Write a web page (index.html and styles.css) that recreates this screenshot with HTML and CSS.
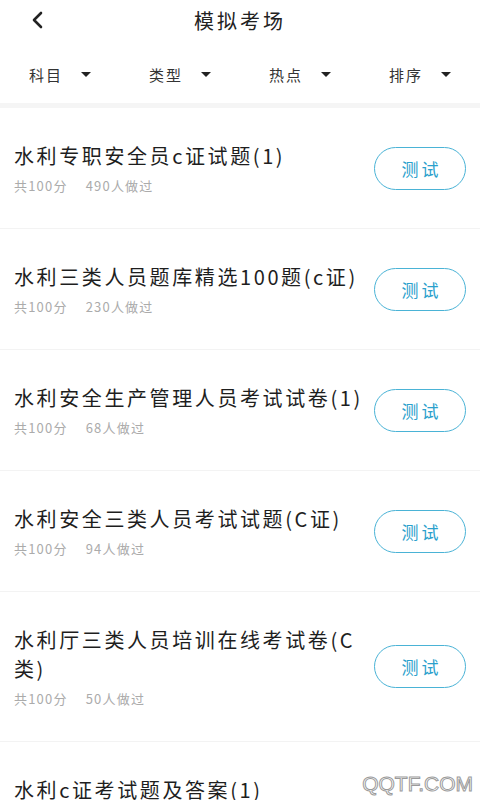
FILE: index.html
```html
<!DOCTYPE html>
<html lang="zh-CN">
<head>
  <meta charset="UTF-8">
  <meta name="viewport" content="width=device-width, initial-scale=1.0">
  <title>模拟考场</title>
  <link rel="stylesheet" href="styles.css">
</head>
<body>

  <header class="header">
    <div class="topbar">
      <a class="back" href="#">
        <svg width="14" height="18" viewBox="0 0 14 18">
          <path d="M11 2 L4 9 L11 16" fill="none" stroke="#222" stroke-width="2.6" stroke-linecap="round" stroke-linejoin="round"/>
        </svg>
      </a>
      <h1 class="title">模拟考场</h1>
      <span></span>
    </div>
    <div class="filters">
      <div class="filter">科目 <span class="caret"></span></div>
      <div class="filter">类型 <span class="caret"></span></div>
      <div class="filter">热点 <span class="caret"></span></div>
      <div class="filter">排序 <span class="caret"></span></div>
    </div>
  </header>
  <div class="band"></div>

  <ul class="list">
    <li class="item">
      <div class="info">
        <p class="name">水利专职安全员c证试题(1)</p>
        <p class="meta"><span>共100分</span><span>490人做过</span></p>
      </div>
      <button class="test-btn">测试</button>
    </li>
    <li class="item">
      <div class="info">
        <p class="name">水利三类人员题库精选100题(c证)</p>
        <p class="meta"><span>共100分</span><span>230人做过</span></p>
      </div>
      <button class="test-btn">测试</button>
    </li>
    <li class="item">
      <div class="info">
        <p class="name">水利安全生产管理人员考试试卷(1)</p>
        <p class="meta"><span>共100分</span><span>68人做过</span></p>
      </div>
      <button class="test-btn">测试</button>
    </li>
    <li class="item">
      <div class="info">
        <p class="name">水利安全三类人员考试试题(C证)</p>
        <p class="meta"><span>共100分</span><span>94人做过</span></p>
      </div>
      <button class="test-btn">测试</button>
    </li>
    <li class="item">
      <div class="info">
        <p class="name">水利厅三类人员培训在线考试卷(C类)</p>
        <p class="meta"><span>共100分</span><span>50人做过</span></p>
      </div>
      <button class="test-btn">测试</button>
    </li>
    <li class="item">
      <div class="info">
        <p class="name">水利c证考试题及答案(1)</p>
        <p class="meta"><span>共100分</span><span>41人做过</span></p>
      </div>
      <button class="test-btn">测试</button>
    </li>
  </ul>

  <div class="watermark">QQTF.COM</div>

</body>
</html>
```

FILE: styles.css
```css
* {
  margin: 0;
  padding: 0;
  box-sizing: border-box;
  font-family: "Noto Sans CJK SC", "Noto Sans", sans-serif;
}

body {
  background: #fff;
  color: #222;
}

.header {
  background: #fff;
}

.topbar {
  display: grid;
  grid-template-columns: 60px 1fr 60px;
  align-items: center;
  height: 40px;
}

.back {
  display: flex;
  align-items: center;
  padding-left: 30px;
  height: 40px;
}

.title {
  text-align: center;
  font-size: 20px;
  font-weight: 400;
  letter-spacing: 3px;
  color: #222;
}

.filters {
  display: grid;
  grid-template-columns: repeat(4, 1fr);
  align-items: center;
  height: 63px;
  padding-top: 5px;
}

.filter {
  display: flex;
  align-items: center;
  gap: 18px;
  padding-left: 29px;
  font-size: 15px;
  letter-spacing: 2px;
  color: #333;
}

.caret {
  width: 0;
  height: 0;
  border-left: 5px solid transparent;
  border-right: 5px solid transparent;
  border-top: 5px solid #222;
}

.band {
  height: 5px;
  background: #f5f5f5;
}

.list {
  list-style: none;
}

.item {
  display: flex;
  align-items: center;
  gap: 4px;
  padding: 33px 14px;
  border-bottom: 1px solid #f3f3f3;
}

.info {
  flex: 1;
}

.name {
  font-size: 20px;
  line-height: 29px;
  letter-spacing: 2.6px;
  color: #1e1e1e;
}

.meta {
  display: flex;
  gap: 18px;
  margin-top: 7px;
  font-size: 13px;
  line-height: 18px;
  letter-spacing: 1.2px;
  color: #ababab;
}

.test-btn {
  flex-shrink: 0;
  width: 92px;
  height: 43px;
  border: 1.5px solid #4ab3d6;
  border-radius: 22px;
  background: #fff;
  color: #2aa0cc;
  font-size: 17px;
  letter-spacing: 3px;
  padding-left: 3px;
  cursor: pointer;
}

.watermark {
  position: fixed;
  right: 0;
  bottom: 0;
  padding: 8px 7px 4px 10px;
  background: #fff;
  font-family: "Liberation Sans", sans-serif;
  font-size: 21px;
  color: #fff;
  -webkit-text-stroke: 1px #9a9a9a;
}
```
